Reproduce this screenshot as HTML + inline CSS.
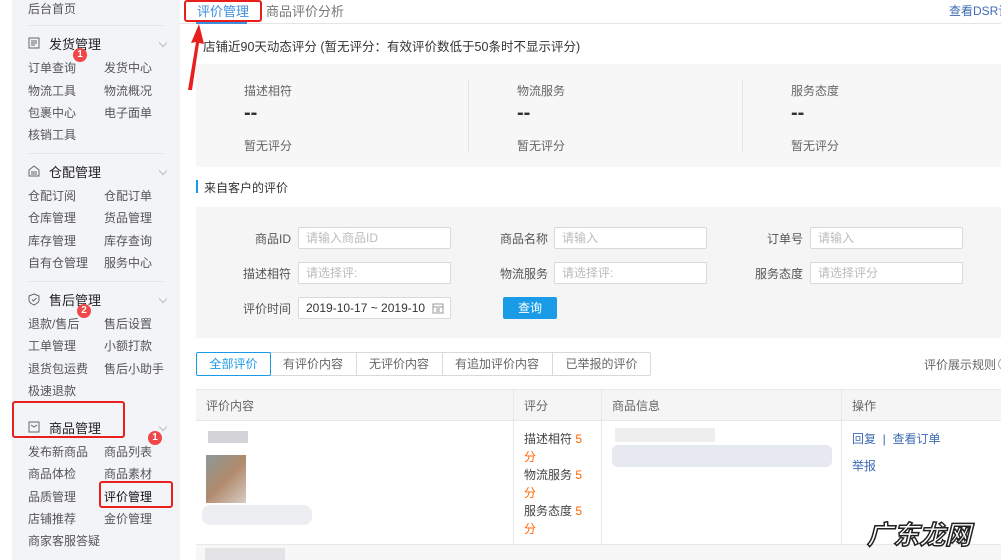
<!DOCTYPE html>
<html><head><meta charset="utf-8"><style>
*{margin:0;padding:0;box-sizing:border-box}
body{width:1001px;height:560px;overflow:hidden;background:#fff;font-family:"Liberation Sans","Noto Sans CJK SC",sans-serif;font-size:12px;color:#333;position:relative}
.a{position:absolute;white-space:nowrap}
.sb{position:absolute;left:12px;top:0;width:168px;height:560px;background:#f3f4f8}
.si{color:#555;font-size:12px}
.sh{color:#222;font-size:13px}
.hr{position:absolute;height:1px;background:#e3e5ea}
.bd{position:absolute;width:14px;height:14px;border-radius:7px;background:#f04848;color:#fff;font-size:10px;text-align:center;line-height:14px;font-weight:bold}
.rb{position:absolute;border:2px solid #e8201c;border-radius:3px}
.inp{position:absolute;height:22px;border:1px solid #d9d9d9;background:#fff;border-radius:2px;color:#bbb;padding-left:7px;line-height:20px;font-size:12px}
.lb{position:absolute;color:#555;text-align:right;width:80px}
.g{color:#666}
.o{color:#f60}
.lk{color:#3d6bb5}
.chev{position:absolute;width:6px;height:6px;border-right:1px solid #bbb;border-bottom:1px solid #bbb;transform:rotate(45deg)}
</style></head><body>
<div class="sb"></div>
<div class="a si" style="left:28px;top:0px">后台首页</div>
<div class="hr" style="left:28px;top:25px;width:136px"></div>
<svg class="a" style="left:28px;top:37px" width="12" height="12"><rect x="1" y="1" width="10" height="10" fill="none" stroke="#666"/><path d="M3 4h6M3 6h6M3 8h4" stroke="#666"/></svg>
<div class="a sh" style="left:49px;top:34px">发货管理</div><div class="chev" style="left:160px;top:40px"></div>
<div class="a si" style="left:28px;top:59px">订单查询</div><div class="a si" style="left:104px;top:59px">发货中心</div>
<div class="a si" style="left:28px;top:82px">物流工具</div><div class="a si" style="left:104px;top:82px">物流概况</div>
<div class="a si" style="left:28px;top:104px">包裹中心</div><div class="a si" style="left:104px;top:104px">电子面单</div>
<div class="a si" style="left:28px;top:126px">核销工具</div>
<div class="bd" style="left:73px;top:48px">1</div>
<div class="hr" style="left:28px;top:153px;width:136px"></div>
<svg class="a" style="left:28px;top:165px" width="12" height="12"><path d="M1 5L6 1L11 5V11H1Z M3 7h6M3 9h6" fill="none" stroke="#666"/></svg>
<div class="a sh" style="left:49px;top:162px">仓配管理</div><div class="chev" style="left:160px;top:168px"></div>
<div class="a si" style="left:28px;top:187px">仓配订阅</div><div class="a si" style="left:104px;top:187px">仓配订单</div>
<div class="a si" style="left:28px;top:209px">仓库管理</div><div class="a si" style="left:104px;top:209px">货品管理</div>
<div class="a si" style="left:28px;top:232px">库存管理</div><div class="a si" style="left:104px;top:232px">库存查询</div>
<div class="a si" style="left:28px;top:254px">自有仓管理</div><div class="a si" style="left:104px;top:254px">服务中心</div>
<div class="hr" style="left:28px;top:281px;width:136px"></div>
<svg class="a" style="left:28px;top:293px" width="12" height="13"><path d="M6 1L11 3V7C11 10 6 12 6 12C6 12 1 10 1 7V3Z M4 6.5L5.5 8L8.5 5" fill="none" stroke="#666"/></svg>
<div class="a sh" style="left:49px;top:290px">售后管理</div><div class="chev" style="left:160px;top:296px"></div>
<div class="bd" style="left:77px;top:304px">2</div>
<div class="a si" style="left:28px;top:315px">退款/售后</div><div class="a si" style="left:104px;top:315px">售后设置</div>
<div class="a si" style="left:28px;top:337px">工单管理</div><div class="a si" style="left:104px;top:337px">小额打款</div>
<div class="a si" style="left:28px;top:360px">退货包运费</div><div class="a si" style="left:104px;top:360px">售后小助手</div>
<div class="a si" style="left:28px;top:382px">极速退款</div>
<svg class="a" style="left:28px;top:421px" width="12" height="12"><rect x="1" y="1" width="10" height="10" fill="none" stroke="#666"/><path d="M3 4L6 6L9 4" fill="none" stroke="#666"/></svg>
<div class="a sh" style="left:49px;top:418px">商品管理</div><div class="chev" style="left:160px;top:424px"></div>
<div class="bd" style="left:148px;top:431px">1</div>
<div class="a si" style="left:28px;top:443px">发布新商品</div><div class="a si" style="left:104px;top:443px">商品列表</div>
<div class="a si" style="left:28px;top:465px">商品体检</div><div class="a si" style="left:104px;top:465px">商品素材</div>
<div class="a si" style="left:28px;top:488px">品质管理</div><div class="a" style="left:104px;top:488px;color:#111">评价管理</div>
<div class="a si" style="left:28px;top:510px">店铺推荐</div><div class="a si" style="left:104px;top:510px">金价管理</div>
<div class="a si" style="left:28px;top:532px">商家客服答疑</div>
<div class="rb" style="left:12px;top:401px;width:113px;height:37px"></div>
<div class="rb" style="left:99px;top:481px;width:74px;height:27px"></div>

<div class="a" style="left:197px;top:1px;font-size:13px;color:#3d8ee0">评价管理</div>
<div class="a" style="left:266px;top:1px;font-size:13px;color:#777">商品评价分析</div>
<div class="a" style="left:949px;top:2px;color:#3d6bb5">查看DSR详</div>
<div class="hr" style="left:180px;top:23px;width:821px;background:#e5e5e5"></div>
<div class="a" style="left:196px;top:22px;width:51px;height:2px;background:#3d8ee0"></div>
<div class="rb" style="left:184px;top:0px;width:78px;height:22px"></div>
<svg class="a" style="left:185px;top:20px" width="30" height="72"><path d="M3 70L11 22L6 23L14 4L19 24L14 23L7 70Z" fill="#e8201c"/></svg>
<div class="a" style="left:203px;top:36px;font-size:12.5px;color:#333">店铺近90天动态评分 (暂无评分：有效评价数低于50条时不显示评分)</div>
<div class="a" style="left:196px;top:64px;width:805px;height:103px;background:#f7f7f7"></div>
<div class="a" style="left:468px;top:80px;width:1px;height:72px;background:#e3e3e3"></div>
<div class="a" style="left:742px;top:80px;width:1px;height:72px;background:#e3e3e3"></div>
<div class="a g" style="left:244px;top:82px">描述相符</div><div class="a" style="left:244px;top:102px;font-size:20px;font-weight:bold;color:#333">--</div><div class="a g" style="left:244px;top:137px">暂无评分</div>
<div class="a g" style="left:517px;top:82px">物流服务</div><div class="a" style="left:517px;top:102px;font-size:20px;font-weight:bold;color:#333">--</div><div class="a g" style="left:517px;top:137px">暂无评分</div>
<div class="a g" style="left:791px;top:82px">服务态度</div><div class="a" style="left:791px;top:102px;font-size:20px;font-weight:bold;color:#333">--</div><div class="a g" style="left:791px;top:137px">暂无评分</div>
<div class="a" style="left:196px;top:180px;width:2px;height:13px;background:#1a9be8"></div>
<div class="a" style="left:204px;top:179px;color:#333">来自客户的评价</div>

<div class="a" style="left:196px;top:207px;width:805px;height:131px;background:#f5f5f5"></div>
<div class="lb" style="left:211px;top:230px">商品ID</div><div class="inp" style="left:298px;top:227px;width:153px">请输入商品ID</div>
<div class="lb" style="left:468px;top:230px">商品名称</div><div class="inp" style="left:554px;top:227px;width:153px">请输入</div>
<div class="lb" style="left:723px;top:230px">订单号</div><div class="inp" style="left:810px;top:227px;width:153px">请输入</div>
<div class="lb" style="left:211px;top:265px">描述相符</div><div class="inp" style="left:298px;top:262px;width:153px">请选择评:</div>
<div class="lb" style="left:468px;top:265px">物流服务</div><div class="inp" style="left:554px;top:262px;width:153px">请选择评:</div>
<div class="lb" style="left:723px;top:265px">服务态度</div><div class="inp" style="left:810px;top:262px;width:153px">请选择评分</div>
<div class="lb" style="left:211px;top:300px">评价时间</div><div class="inp" style="left:298px;top:297px;width:153px;color:#333">2019-10-17 ~ 2019-10</div>
<svg class="a" style="left:432px;top:302px" width="12" height="12"><rect x="1" y="2" width="10" height="9" fill="none" stroke="#999"/><path d="M1 5h10M4 7h4M4 9h4" stroke="#999"/></svg>
<div class="a" style="left:503px;top:297px;width:54px;height:22px;background:#1a9be8;color:#fff;text-align:center;line-height:22px;border-radius:2px">查询</div>

<div class="a" style="left:196px;top:352px;width:455px;height:24px;border:1px solid #d9d9d9;border-radius:2px"></div>
<div class="a" style="left:196px;top:352px;width:75px;height:24px;border:1px solid #1a9be8;color:#1a9be8;text-align:center;line-height:22px;border-radius:2px">全部评价</div>
<div class="a g" style="left:270px;top:352px;width:87px;height:24px;border-right:1px solid #d9d9d9;text-align:center;line-height:24px">有评价内容</div>
<div class="a g" style="left:356px;top:352px;width:87px;height:24px;border-right:1px solid #d9d9d9;text-align:center;line-height:24px">无评价内容</div>
<div class="a g" style="left:442px;top:352px;width:111px;height:24px;border-right:1px solid #d9d9d9;text-align:center;line-height:24px">有追加评价内容</div>
<div class="a g" style="left:552px;top:352px;width:99px;height:24px;text-align:center;line-height:24px">已举报的评价</div>
<div class="a g" style="left:924px;top:356px">评价展示规则</div>
<div class="a" style="left:998px;top:358px;width:12px;height:12px;border:1px solid #aaa;border-radius:6px"></div>

<div class="a" style="left:196px;top:389px;width:805px;height:32px;background:#f5f5f5;border-top:1px solid #e8e8e8;border-bottom:1px solid #e8e8e8"></div>
<div class="a" style="left:513px;top:389px;width:1px;height:171px;background:#e8e8e8"></div>
<div class="a" style="left:601px;top:389px;width:1px;height:171px;background:#e8e8e8"></div>
<div class="a" style="left:841px;top:389px;width:1px;height:171px;background:#e8e8e8"></div>
<div class="a" style="left:196px;top:544px;width:805px;height:16px;background:#f7f7f7;border-top:1px solid #e8e8e8"></div>
<div class="a g" style="left:206px;top:397px">评价内容</div>
<div class="a g" style="left:524px;top:397px">评分</div>
<div class="a g" style="left:612px;top:397px">商品信息</div>
<div class="a g" style="left:852px;top:397px">操作</div>
<div class="a" style="left:524px;top:430px;line-height:18px;color:#444;white-space:normal;width:70px">描述相符 <span class="o">5 分</span><br>物流服务 <span class="o">5 分</span><br>服务态度 <span class="o">5 分</span></div>
<div class="a lk" style="left:852px;top:430px">回复 &nbsp;|&nbsp; 查看订单</div>
<div class="a lk" style="left:852px;top:457px">举报</div>
<div class="a" style="left:208px;top:431px;width:40px;height:12px;background:#d4d4d8"></div>
<div class="a" style="left:206px;top:455px;width:40px;height:48px;background:linear-gradient(135deg,#8a9a98,#b08a6c 50%,#d8ccc4)"></div>
<div class="a" style="left:202px;top:505px;width:110px;height:20px;background:#eceef2;border-radius:8px"></div>
<div class="a" style="left:615px;top:428px;width:100px;height:14px;background:#eeeeef"></div>
<div class="a" style="left:612px;top:445px;width:220px;height:22px;background:#e6e9f0;border-radius:6px"></div>
<div class="a" style="left:205px;top:548px;width:80px;height:12px;background:#e4e4e6"></div>
<div class="a" style="left:867px;top:515px;font-size:26px;font-weight:bold;color:#fff;-webkit-text-stroke:1.5px #222;font-style:italic">广东龙网</div>
</body></html>
